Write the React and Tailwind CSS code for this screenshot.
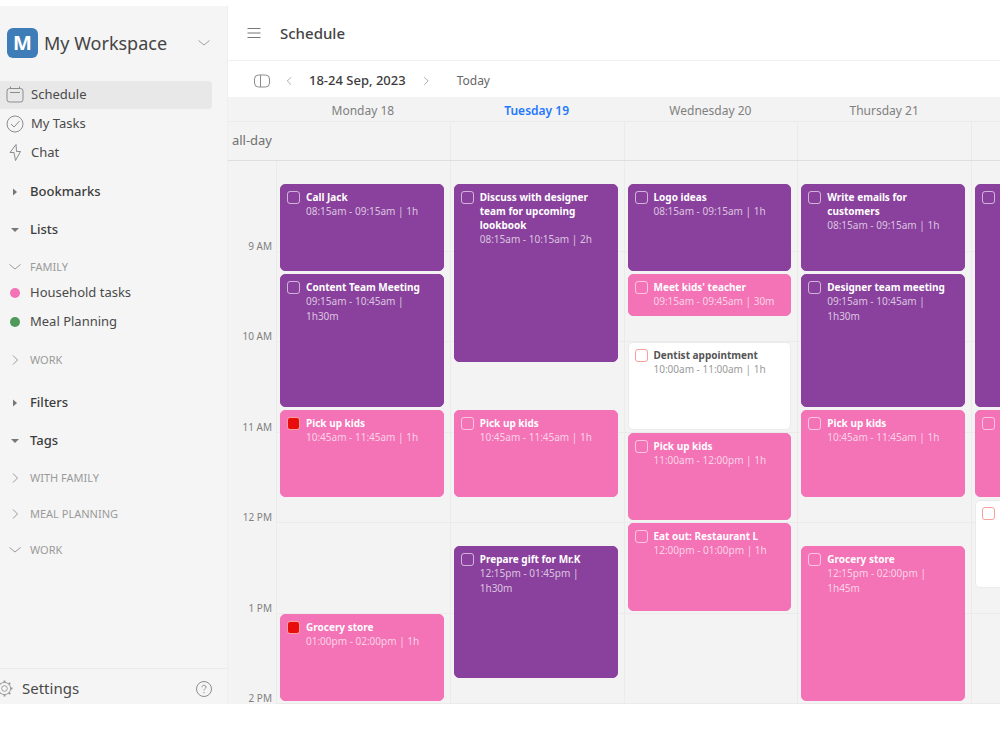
import React, { useState } from "react";
import clsx from "clsx";

const DAYS = [
  {
    name: "Monday 18",
    events: [
      { title: "Call Jack", time: "08:15am - 09:15am | 1h", from: 8.25, to: 9.25, color: "purple" },
      { title: "Content Team Meeting", time: "09:15am - 10:45am | 1h30m", from: 9.25, to: 10.75, color: "purple" },
      { title: "Pick up kids", time: "10:45am - 11:45am | 1h", from: 10.75, to: 11.75, color: "pink", done: true },
      { title: "Grocery store", time: "01:00pm - 02:00pm | 1h", from: 13, to: 14, color: "pink", done: true },
    ],
  },
  {
    name: "Tuesday 19",
    today: true,
    events: [
      { title: "Discuss with designer team for upcoming lookbook", time: "08:15am - 10:15am | 2h", from: 8.25, to: 10.25, color: "purple" },
      { title: "Pick up kids", time: "10:45am - 11:45am | 1h", from: 10.75, to: 11.75, color: "pink" },
      { title: "Prepare gift for Mr.K", time: "12:15pm - 01:45pm | 1h30m", from: 12.25, to: 13.75, color: "purple" },
    ],
  },
  {
    name: "Wednesday 20",
    events: [
      { title: "Logo ideas", time: "08:15am - 09:15am | 1h", from: 8.25, to: 9.25, color: "purple" },
      { title: "Meet kids' teacher", time: "09:15am - 09:45am | 30m", from: 9.25, to: 9.75, color: "pink" },
      { title: "Dentist appointment", time: "10:00am - 11:00am | 1h", from: 10, to: 11, color: "white" },
      { title: "Pick up kids", time: "11:00am - 12:00pm | 1h", from: 11, to: 12, color: "pink" },
      { title: "Eat out: Restaurant L", time: "12:00pm - 01:00pm | 1h", from: 12, to: 13, color: "pink" },
    ],
  },
  {
    name: "Thursday 21",
    events: [
      { title: "Write emails for customers", time: "08:15am - 09:15am | 1h", from: 8.25, to: 9.25, color: "purple" },
      { title: "Designer team meeting", time: "09:15am - 10:45am | 1h30m", from: 9.25, to: 10.75, color: "purple" },
      { title: "Pick up kids", time: "10:45am - 11:45am | 1h", from: 10.75, to: 11.75, color: "pink" },
      { title: "Grocery store", time: "12:15pm - 02:00pm | 1h45m", from: 12.25, to: 14, color: "pink" },
    ],
  },
  {
    name: "",
    events: [
      { title: "", time: "", from: 8.25, to: 10.75, color: "purple" },
      { title: "", time: "", from: 10.75, to: 11.75, color: "pink" },
      { title: "", time: "", from: 11.75, to: 12.75, color: "white" },
    ],
  },
];

const HOURS = ["9 AM", "10 AM", "11 AM", "12 PM", "1 PM", "2 PM"];

const Chevron = ({ dir = "down", className }) => {
  const paths = {
    down: "M1.5 4.5 L7 9 L12.5 4.5",
    right: "M5 2.5 L9.5 7 L5 11.5",
    left: "M9.5 2.5 L5 7 L9.5 11.5",
  };
  return (
    <svg viewBox="0 0 14 14" fill="none" stroke="currentColor" className={clsx("shrink-0", className)}>
      <path d={paths[dir]} />
    </svg>
  );
};

const Caret = ({ open }) => (
  <svg viewBox="0 0 10 10" className="size-[10px] shrink-0" fill="#777777">
    <path d={open ? "M1 3 H9 L5 7 Z" : "M3 1.5 L7 5 L3 8.5 Z"} />
  </svg>
);

const CalendarIcon = () => (
  <svg viewBox="0 0 18 18" className="size-[18px]" fill="none" stroke="#8c8c8c">
    <rect x="1" y="2.5" width="16" height="13.5" rx="2.5" />
    <path d="M4.5 0.5 V3 M13.5 0.5 V3 M4 6.5 H14" />
  </svg>
);

const TasksIcon = () => (
  <svg viewBox="0 0 18 18" className="size-[18px]" fill="none" stroke="#8c8c8c">
    <circle cx="9" cy="9" r="8" />
    <path d="M5 9 L8 12 L13.5 6" />
  </svg>
);

const ChatIcon = () => (
  <svg viewBox="0 0 18 18" className="size-[18px]" fill="none" stroke="#8c8c8c" strokeLinejoin="round">
    <path d="M10 0.5 L4 8.5 H8 L9.5 16.5 L14.5 7.5 H10.5 Z" />
  </svg>
);

const NavItem = ({ icon, label, active }) => (
  <button
    className={clsx(
      "flex h-7 items-center gap-[7px] rounded-r pl-[6px] text-left text-[13px] text-[#4a4a4a]",
      active && "bg-[#e8e8e8]"
    )}
  >
    {icon}
    {label}
  </button>
);

const Section = ({ label, open }) => (
  <button className="flex h-[38px] items-center gap-[10px] pl-[10px] text-left text-[13px] font-medium text-[#3c3c3c]">
    <Caret open={open} />
    {label}
  </button>
);

const Group = ({ label, open, className }) => (
  <button className={clsx("flex h-6 items-center gap-2 pl-2 text-left text-[11px] text-[#9a9a9a]", className)}>
    <Chevron dir={open ? "down" : "right"} className="size-[14px]" />
    {label}
  </button>
);

const ListItem = ({ dot, label }) => (
  <button className="flex h-7 items-center gap-[10px] pl-[10px] text-left text-[13px] text-[#4a4a4a]">
    <span className={clsx("size-[10px] rounded-full", dot)} />
    {label}
  </button>
);

const Sidebar = () => (
  <aside className="flex w-[228px] shrink-0 flex-col border-r border-[#efefef] bg-[#f5f5f5]">
    <button className="mt-[22px] flex items-center gap-[6px] pl-[7px] pr-4 text-left">
      <span className="flex h-[30px] w-[31px] items-center justify-center rounded-md bg-[#3f7db8] text-xl font-bold text-white">
        M
      </span>
      <span className="flex-1 text-lg text-[#444444]">My Workspace</span>
      <Chevron className="size-[14px] text-[#a0a0a0]" />
    </button>

    <nav className="mt-[23px] flex flex-col gap-px pr-[15px]">
      <NavItem icon={<CalendarIcon />} label="Schedule" active />
      <NavItem icon={<TasksIcon />} label="My Tasks" />
      <NavItem icon={<ChatIcon />} label="Chat" />
    </nav>

    <div className="mt-[6px] flex flex-col">
      <Section label="Bookmarks" />
      <Section label="Lists" open />
      <Group label="FAMILY" open className="mt-[6px]" />
      <div className="flex flex-col gap-px">
        <ListItem dot="bg-[#f472b6]" label="Household tasks" />
        <ListItem dot="bg-[#4f9a5b]" label="Meal Planning" />
      </div>
      <Group label="WORK" className="my-3" />
      <Section label="Filters" />
      <Section label="Tags" open />
      <Group label="WITH FAMILY" className="mt-[6px]" />
      <Group label="MEAL PLANNING" className="mt-3" />
      <Group label="WORK" open className="mt-3" />
    </div>

    <div className="mt-auto flex h-9 items-center justify-between overflow-hidden border-t border-[#ebebeb] pr-[14px]">
      <button className="-ml-1 flex items-center gap-[9px] pt-1 text-[15px] text-[#4a4a4a]">
        <svg viewBox="0 0 18 18" className="size-[17px]" fill="none" stroke="#999999">
          <circle cx="9" cy="9" r="6.5" />
          <circle cx="9" cy="9" r="3" />
          <path strokeWidth="2" d="M9 0.5 V3 M9 15 V17.5 M0.5 9 H3 M15 9 H17.5 M3 3 L4.5 4.5 M13.5 13.5 L15 15 M15 3 L13.5 4.5 M4.5 13.5 L3 15" />
        </svg>
        Settings
      </button>
      <button aria-label="Help" className="pt-1">
        <svg viewBox="0 0 18 18" className="size-[18px]" fill="none" stroke="#8c8c8c">
          <circle cx="9" cy="9" r="7.5" />
          <path d="M7 7.2 C7 4.6 11.2 4.8 11 7.2 C10.9 8.5 9 8.6 9 10.4 M9 12 V13.2" />
        </svg>
      </button>
    </div>
  </aside>
);

const EventCard = ({ event }) => {
  const [done, setDone] = useState(!!event.done);
  const light = event.color === "white";

  // four grid rows per hour, first row is 8 AM
  const style = {
    gridRow: `${(event.from - 8) * 4 + 1} / ${(event.to - 8) * 4 + 1}`,
  };

  return (
    <label
      style={style}
      className={clsx(
        "z-10 col-start-1 mb-[3px] ml-[3px] mr-[6px] flex items-start gap-[6px] overflow-hidden rounded-[5px] border py-[5px] pl-[6px] pr-[5px] text-[10px]",
        event.color === "purple" && "border-[#8a419d] bg-[#8a419d] text-white",
        event.color === "pink" && "border-[#f472b6] bg-[#f472b6] text-white",
        light && "border-[#ebebeb] bg-white text-[#555555]"
      )}
    >
      <input
        type="checkbox"
        checked={done}
        onChange={() => setDone(!done)}
        aria-label={event.title || "Event"}
        className={clsx(
          "mt-px size-[13px] shrink-0 appearance-none rounded-[3px] border checked:bg-[#e80c0c]",
          light ? "border-[#f9a09c]" : "border-white/60"
        )}
      />
      <span className="flex min-w-0 flex-1 flex-col">
        <span className="font-bold leading-[14px]">{event.title}</span>
        <span className={clsx("leading-[15px]", light ? "text-[#9a9a9a]" : "text-white/70")}>{event.time}</span>
      </span>
    </label>
  );
};

const DayColumn = ({ day }) => (
  <div className="grid grid-cols-1 grid-rows-[repeat(24,minmax(22px,1fr))] border-l border-[#ebebeb]">
    {HOURS.map((hour, i) => (
      <div
        key={hour}
        style={{ gridRow: `${i * 4 + 1} / span 4` }}
        className="col-start-1 border-b border-[#ebebeb]"
      />
    ))}
    {day.events.map((event) => (
      <EventCard key={event.from} event={event} />
    ))}
  </div>
);

const Calendar = () => (
  <div className="flex flex-1 flex-col overflow-hidden bg-[#f3f3f3]">
    <div className="flex h-6 text-xs text-[#808080]">
      <div className="w-12 shrink-0" />
      <div className="grid flex-1 grid-cols-[repeat(5,24%)] items-center">
        {DAYS.map((day, i) => (
          <div key={i} className={clsx("pt-[3px] text-center", day.today && "font-semibold text-[#2478ff]")}>
            {day.name}
          </div>
        ))}
      </div>
    </div>

    <div className="flex h-10 border-b border-t border-b-[#dedede] border-t-[#ebebeb]">
      <div className="flex w-12 shrink-0 items-center justify-end pr-1 text-[13px] text-[#707070]">all-day</div>
      <div className="grid flex-1 grid-cols-[repeat(5,24%)]">
        {DAYS.map((day, i) => (
          <div key={i} className={clsx(i > 0 && "border-l border-[#ebebeb]")} />
        ))}
      </div>
    </div>

    <div className="flex flex-1">
      <div className="grid w-12 shrink-0 grid-rows-6 pr-1 text-[10px] leading-3 text-[#808080]">
        {HOURS.map((hour) => (
          <div key={hour} className="flex items-end justify-end">
            {hour}
          </div>
        ))}
      </div>
      <div className="grid flex-1 grid-cols-[repeat(5,24%)]">
        {DAYS.map((day, i) => (
          <DayColumn key={i} day={day} />
        ))}
      </div>
    </div>
  </div>
);

const App = () => {
  return (
    <div className="flex min-h-screen overflow-hidden bg-white pb-[46px] pt-[6px] font-['Noto_Sans','Open_Sans',sans-serif]">
      <Sidebar />
      <main className="flex min-w-0 flex-1 flex-col">
        <header className="flex h-[55px] items-center gap-[19px] border-b border-[#f0f0f0] pl-[19px]">
          <button aria-label="Menu">
            <svg viewBox="0 0 14 14" className="size-[14px]" stroke="#777777">
              <path d="M0.5 2.5 H13.5 M0.5 7 H13.5 M0.5 11.5 H13.5" />
            </svg>
          </button>
          <h1 className="text-[15px] font-medium text-[#444444]">Schedule</h1>
        </header>

        <div className="flex h-9 items-center pl-[26px] pt-[3px]">
          <button aria-label="Toggle panel">
            <svg viewBox="0 0 16 14" className="h-[14px] w-4" fill="none" stroke="#8c8c8c">
              <rect x="0.5" y="1" width="15" height="12" rx="4" />
              <path d="M6.5 1 V13" />
            </svg>
          </button>
          <button aria-label="Previous week" className="ml-[13px]">
            <Chevron dir="left" className="size-3 text-[#a0a0a0]" />
          </button>
          <span className="ml-[14px] text-[13px] font-medium text-[#3c3c3c]">18-24 Sep, 2023</span>
          <button aria-label="Next week" className="ml-[14px]">
            <Chevron dir="right" className="size-3 text-[#a0a0a0]" />
          </button>
          <button className="ml-[25px] text-xs text-[#666666]">Today</button>
        </div>

        <Calendar />
      </main>
    </div>
  );
};

export default App;
